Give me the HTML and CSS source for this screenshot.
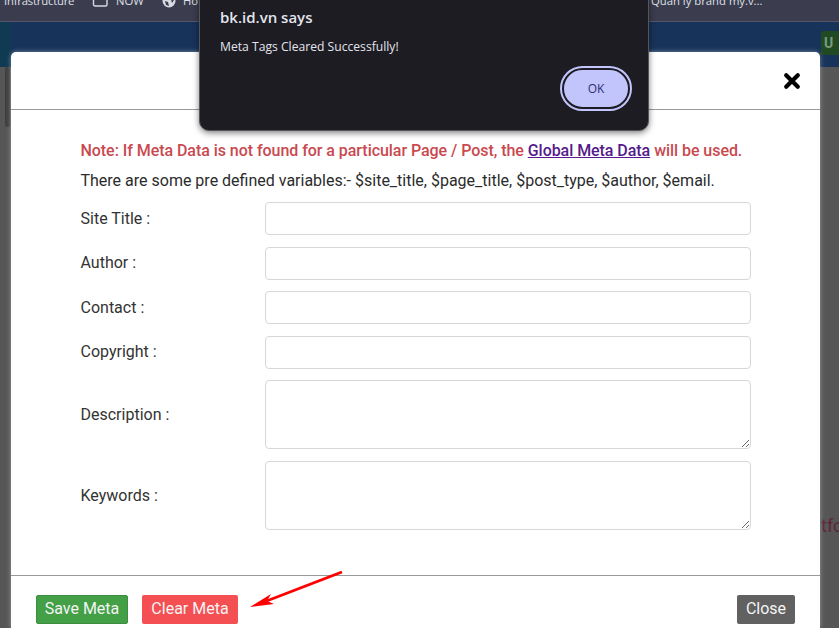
FILE: index.html
```html
<!DOCTYPE html>
<html lang="en">
<head>
<meta charset="utf-8">
<title>Meta Data</title>
<link rel="stylesheet" href="styles.css">
</head>
<body>
<div class="bookmarks">
  <span class="bm bm-infra">Infrastructure</span>
  <span class="bm bm-now"><svg class="bm-icon" width="16" height="16" viewBox="0 0 16 16"><rect x="1.5" y="0" width="13.5" height="13" rx="1.5" fill="none" stroke="#d8d9e2" stroke-width="1.4"/></svg>NOW</span>
  <span class="bm bm-ho"><svg class="bm-icon" width="14" height="14" viewBox="0 0 14 14"><circle cx="7" cy="7" r="6.5" fill="#d8d9e2"/><path d="M3 7l3 1 1 4-3-1zM9 5l3 1-2 3z" fill="#3b3c4e"/></svg>Ho</span>
  <span class="bm bm-quan">Quan ly brand my.v...</span>
</div>
<div class="site-head"><span class="head-edge"></span></div>
<div class="backdrop">
  <span class="scroll-thumb"></span>
  <span class="under-text">tfc</span>
</div>
<span class="badge">U</span>

<section class="modal">
  <header class="modal-head"><button class="x" aria-label="Close"><svg width="18" height="18" viewBox="0 0 18 18"><path d="M3.2 3.2L14.8 14.8M14.8 3.2L3.2 14.8" stroke="#000" stroke-width="4.2" stroke-linecap="round"/></svg></button></header>
  <div class="modal-body">
    <p class="note">Note: If Meta Data is not found for a particular Page / Post, the <a href="#">Global Meta Data</a> will be used.</p>
    <p class="vars">There are some pre defined variables:- $site_title, $page_title, $post_type, $author, $email.</p>
    <form class="fields">
      <label class="lbl">Site Title :</label><input class="ctl" type="text">
      <label class="lbl">Author :</label><input class="ctl" type="text">
      <label class="lbl">Contact :</label><input class="ctl" type="text">
      <label class="lbl">Copyright :</label><input class="ctl" type="text">
      <label class="lbl">Description :</label><textarea class="ctl area"></textarea>
      <label class="lbl lbl-last">Keywords :</label><textarea class="ctl area"></textarea>
    </form>
  </div>
  <footer class="modal-foot">
    <button class="btn save">Save Meta</button>
    <button class="btn clear">Clear Meta</button>
    <button class="btn close">Close</button>
  </footer>
</section>

<svg class="arrow" width="100" height="40" viewBox="0 0 100 40"><path d="M92 1L14 31" stroke="#f00" stroke-width="2.8" fill="none"/><path d="M0 36L21 23L17 30L24 33Z" fill="#f00"/></svg>

<div class="alert" role="alertdialog">
  <h2 class="alert-title">bk.id.vn says</h2>
  <p class="alert-msg">Meta Tags Cleared Successfully!</p>
  <div class="alert-actions"><button class="ok">OK</button></div>
</div>
</body>
</html>
```
FILE: styles.css
```css
html, body { margin: 0; padding: 0; height: 100%; overflow: hidden; }
body { position: relative; width: 839px; height: 628px; background: #565656; font-family: Roboto, "Liberation Sans", sans-serif; display: flex; flex-direction: column; }

.bookmarks { height: 21px; flex: none; background: #3b3c4e; border-bottom: 1px solid #55566a; position: relative; overflow: hidden; font-family: "Open Sans", "Noto Sans", sans-serif; font-size: 11.3px; color: #dfe0e8; }
.bm { position: absolute; top: -7px; line-height: 16px; white-space: nowrap; display: flex; align-items: center; gap: 8px; }
.bm-icon { flex: none; }
.bm-infra { left: 4px; letter-spacing: -.2px; }
.bm-now { left: 92px; }
.bm-ho { left: 162px; gap: 7px; }
.bm-quan { left: 651px; }

.site-head { height: 45px; flex: none; background: #17335a; position: relative; }
.head-edge { position: absolute; left: 0; top: 0; width: 11px; height: 100%; background: #0f3a52; }
.backdrop { flex: 1; position: relative; background: #565656; }
.scroll-thumb { position: absolute; left: 5px; top: 0; width: 5px; height: 60px; background: #3f3f3f; border-radius: 3px; }
.under-text { position: absolute; left: 821px; top: 447px; font-size: 18px; line-height: 24px; color: #5f2436; width: 18px; overflow: hidden; }
.badge { position: absolute; left: 821px; top: 31px; width: 18px; height: 24px; background: #1f4a24; border-radius: 3px 0 0 0; color: #7d9a80; font-weight: 700; font-size: 14px; line-height: 24px; padding-left: 3px; box-sizing: border-box; }

.modal { position: absolute; left: 11px; top: 52px; width: 809px; height: 576px; background: #fff; border-radius: 5px 5px 0 0; box-shadow: 0 0 5px rgba(200,210,225,.55); display: flex; flex-direction: column; }
.modal-head { height: 57px; flex: none; border-bottom: 1px solid #999; display: flex; justify-content: flex-end; align-items: center; padding: 0 19px 0 0; box-sizing: content-box; }
.x { background: none; border: 0; padding: 0; width: 18px; height: 18px; }
.x svg { display: block; }
.modal-body { flex: 1; padding: 29px 69px 0 69.5px; color: #333; font-size: 16px; line-height: 24px; }
.note { margin: 0; color: #c9494f; font-weight: 500; white-space: nowrap; letter-spacing: -.05px; }
.note a { color: #551a8b; text-decoration: underline; }
.vars { margin: 6px 0 0; color: #2b2b2b; white-space: nowrap; }
.fields { display: grid; grid-template-columns: 184.5px 486px; row-gap: 11.5px; margin-top: 9px; align-items: center; }
.lbl { color: #333; padding-top: .5px; }
.lbl-last { padding-top: 2px; }
.ctl { display: block; box-sizing: border-box; width: 486px; height: 33px; margin: 0; background: #fff; border: 1px solid #d8d8d8; border-radius: 4px; box-shadow: inset 0 0 1px rgba(0,0,0,.05); padding: 6px 12px; outline: none; font: inherit; }
.area { height: 69px; resize: vertical; }
.modal-foot { height: 53px; flex: none; border-top: 1px solid #999; display: flex; align-items: flex-start; padding: 19px 25px 0 25px; gap: 14px; box-sizing: border-box; }
.btn { height: 29px; border: 1px solid transparent; border-radius: 2px; color: #f4f4f4; font: 400 16px/1 Roboto, sans-serif; padding: 0 0 2px; text-align: center; white-space: nowrap; }
.save { width: 92px; background: #43a047; border-color: #3b8f3f; }
.clear { width: 96px; background: #f44f52; }
.close { width: 58px; background: #616161; margin-left: auto; }

.arrow { position: absolute; left: 250px; top: 571px; }

.alert { position: absolute; left: 199px; top: -10px; width: 450px; height: 141px; box-sizing: border-box; padding: 10px 20px 0; background: #1c1c22; border-radius: 10px; border: 1px solid #55565c; box-shadow: 0 2px 6px rgba(0,0,0,.5); font-family: "Open Sans", "Noto Sans", sans-serif; display: flex; flex-direction: column; }
.alert-title { margin: 0; padding-top: 6px; font-size: 15px; line-height: 20px; font-weight: 600; color: #e4e4ee; }
.alert-msg { margin: 11px 0 0; font-size: 12.15px; line-height: 18px; color: #e4e4ee; white-space: nowrap; }
.alert-actions { display: flex; justify-content: flex-end; margin-top: 12px; }
.ok { box-sizing: border-box; width: 68px; height: 41px; margin-right: -2px; border: 2px solid #1c1c22; border-radius: 21px; background: #c2c5fb; outline: 2px solid #c2c5fb; color: #2c2f72; font: 12px "Open Sans", sans-serif; }
```
